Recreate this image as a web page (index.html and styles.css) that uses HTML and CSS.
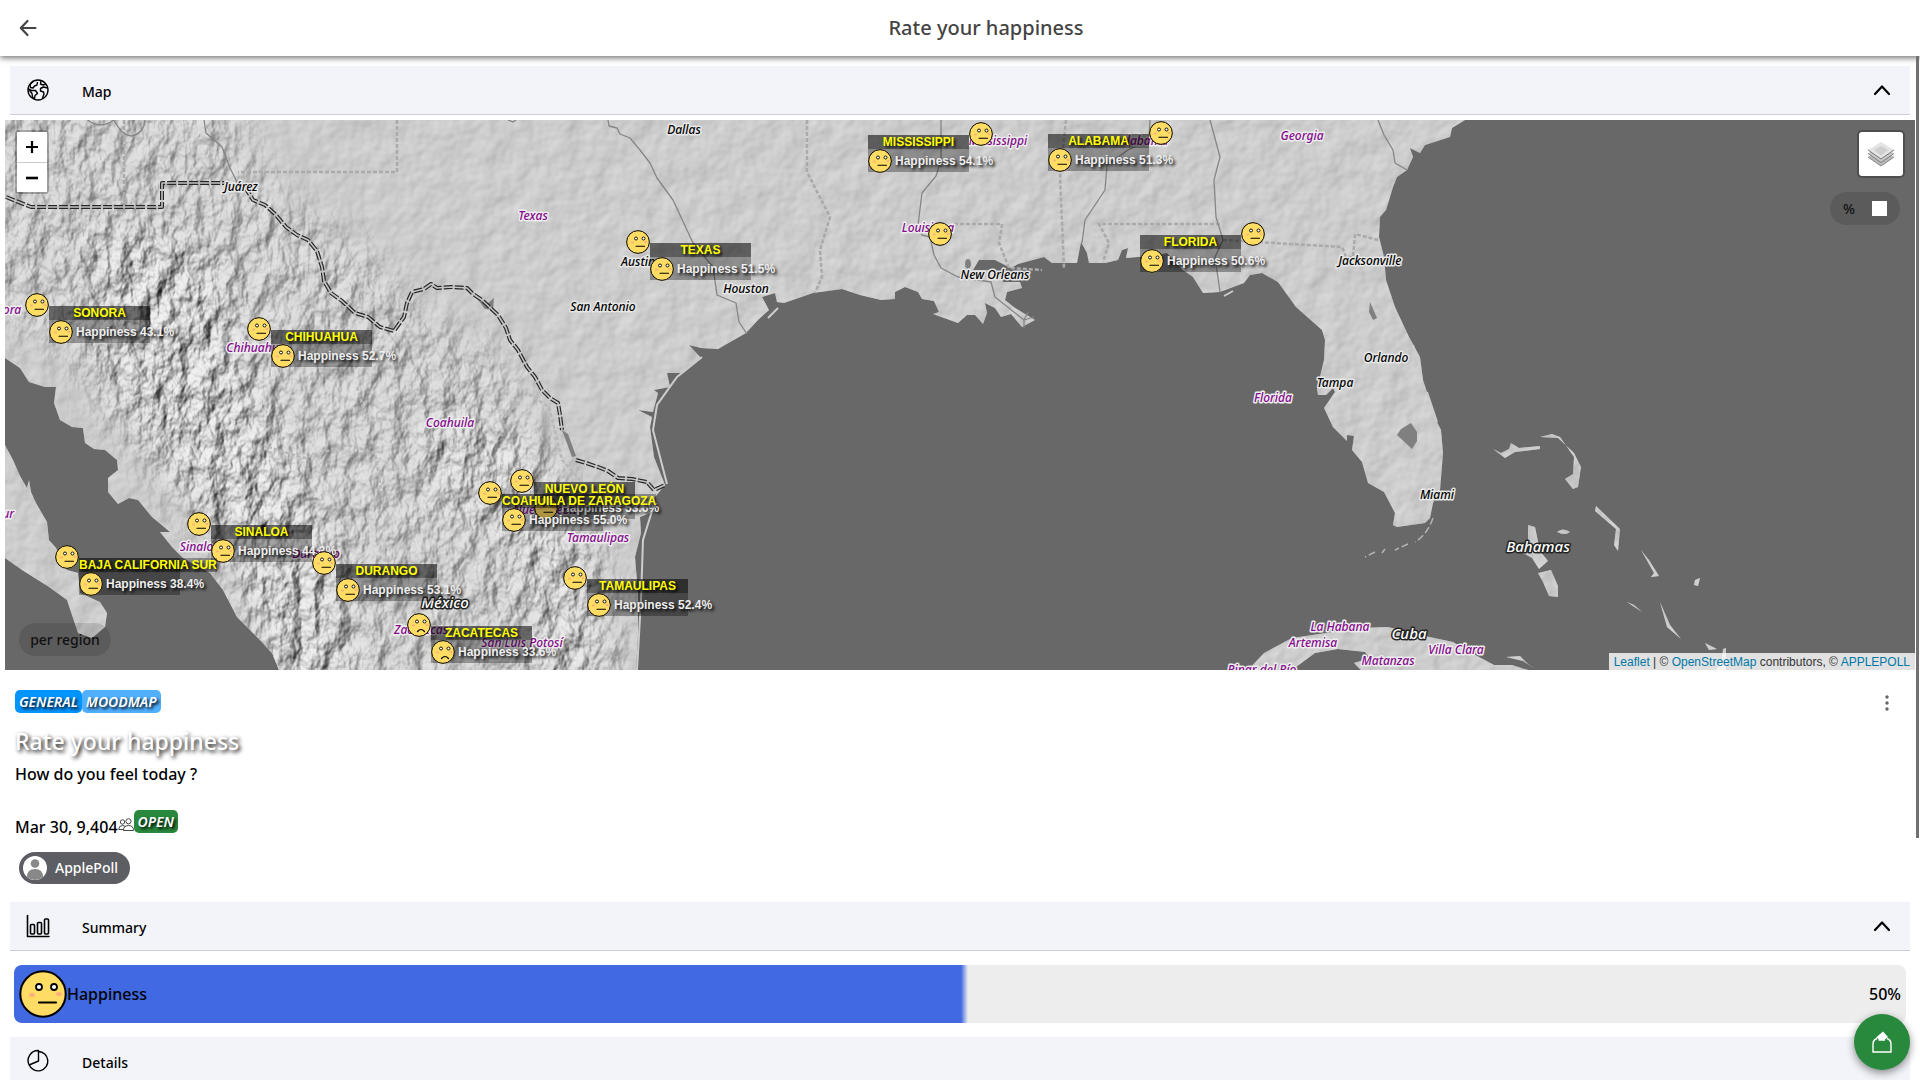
FILE: index.html
```html
<!DOCTYPE html>
<html lang="en">
<head>
<meta charset="utf-8">
<title>Rate your happiness</title>
<link rel="stylesheet" href="styles.css">
</head>
<body>
<svg class="defs" aria-hidden="true">
  <symbol id="face" viewBox="0 0 48 48">
    <circle cx="24" cy="24" r="23" fill="#ffdc64"/>
    <path d="M12 5a23 23 0 0 0 17 41A23 23 0 0 1 12 5z" fill="#ffc850"/>
    <ellipse cx="13" cy="25" rx="3" ry="2" fill="#ffb07c"/><ellipse cx="40" cy="24" rx="3" ry="2" fill="#ffb07c"/>
    <circle cx="24" cy="24" r="22.7" fill="none" stroke="#000" stroke-width="2"/>
    <circle cx="20" cy="17" r="3" fill="#fff" stroke="#000" stroke-width="1.8"/><circle cx="35" cy="17" r="3" fill="#fff" stroke="#000" stroke-width="1.8"/>
  </symbol>
  <symbol id="neutral" viewBox="0 0 48 48"><use href="#face"/><path d="M20 32.500h17" stroke="#000" stroke-width="2.200" stroke-linecap="round"/></symbol>
  <symbol id="sad" viewBox="0 0 48 48"><use href="#face"/><path d="M21 37q7-8 14 0" fill="none" stroke="#000" stroke-width="2.400" stroke-linecap="round"/></symbol>
  <symbol id="chevron" viewBox="0 0 20 20"><path d="M3 14l7-7.500 7 7.500" fill="none" stroke="#000" stroke-width="2.200" stroke-linecap="round" stroke-linejoin="round"/></symbol>
</svg>

<header class="topbar">
  <button class="back" aria-label="Back"><svg viewBox="0 0 20 20" width="20" height="20"><path d="M17.500 10H3M9.500 3L2.800 10l6.700 7" fill="none" stroke="#444" stroke-width="2.200" stroke-linecap="round" stroke-linejoin="round"/></svg></button>
  <h1>Rate your happiness</h1>
</header>

<main class="content">
  <button class="section">
    <svg viewBox="0 0 24 24" width="24" height="24"><g fill="none" stroke="#000" stroke-width="1.400" stroke-linejoin="round"><circle cx="12" cy="12" r="10"/><path d="M7.500 3L4 6.500l.5 3 2.500.5 1.500-2 2.500-1 .5-3M2.500 11l3 1.500 4 0 2 3-2.500 2-.5 3.500-2-2-.5-3.500zM15 2.500l-.5 3.500 2.500 1 3-1M21.500 10l-4-1-3 1.500 0 2.500 3 1 .5 2-1.500 4"/></g></svg>
    <span>Map</span>
    <svg class="chevron" width="20" height="20"><use href="#chevron"/></svg>
  </button>

  <div class="map">
    <svg class="tiles" width="1910" height="550" viewBox="5 120 1910 550">
      <defs>
        <path id="mainland" d="M5 120V358L20 368 29 382 45 387 56 387 54 403 60 420 72 427 83 428 85 443 94 449 105 450 117 460 118 470 108 478 108 492 118 504 129 498 138 500 152 517 170 532 160 532 172 547 183 558 210 573 223 590 237 617 257 637 272 653 279 670H636L638 633 638 593 635 557 641 533 640 517 656 511 655 497 665 485 654 457 650 427 652 417 638 410 653 412 658 393 654 390 670 387 667 373 683 373 701 358 689 345 701 348 718 349 746 333 758 320 769 310 762 297 775 293 777 302 784 303 813 293 842 289 860 295 881 300 895 299 895 292 905 287 918 292 922 299 934 301 939 312 933 314 958 323 967 315 975 315 983 324 987 313 985 303 995 308 1001 317 1011 314 1022 327 1035 320 1015 308 1005 300 1007 292 1022 288 1020 282 1003 282 995 270 973 270 979 260 995 260 1011 268 1018 264 1044 257 1052 263 1077 263 1081 242 1087 253 1089 263 1105 263 1118 260 1122 250 1128 248 1126 258 1150 256 1167 253 1183 270 1193 277 1203 293 1220 292 1244 283 1250 275 1262 273 1278 282 1296 307 1322 330 1325 340 1324 360 1317 389 1318 395 1326 395 1333 388 1335 392 1324 408 1333 427 1347 441 1347 435 1354 436 1352 450 1362 462 1368 483 1384 492 1395 513 1393 525 1397 527 1425 523 1430 518 1433 503 1440 490 1443 453 1441 430 1436 420 1423 380 1420 357 1409 337 1395 307 1386 280 1384 257 1379 237 1380 217 1386 210 1393 187 1397 177 1407 170 1413 157 1410 148 1420 153 1425 145 1450 137 1452 128 1465 120z"/>
        <path id="baja" d="M5 445L13 460 20 476 27 488 29 480 31 492 36 503 47 522 49 540 56 548 67 570 78 573 80 593 100 602 107 613 105 627 92 638 78 633 67 600 49 587 22 570 5 558z"/>
        <path id="islands" d="M1248 670L1264 653 1292 638 1333 632 1358 628 1388 627 1420 635 1453 642 1466 650 1494 665 1512 665 1528 670H1361L1354 663 1370 658 1365 652 1338 649 1315 653 1292 670zM1506 657l14-1 8 8 9 6-14-9zM1493 449l8 4 8-4 2-6 8 5 21-2v3l-25 3-10 6zM1540 437l18 1 16 15 7 14-3 20-5 2-8-10 8-5 1-17-14-20-8-3zM1528 525l7 2 5 24 8 10-9 8-7-11-9-5 5-8zM1538 573l13-3 7 16v11l-9-1-6-14zM1557 532q6-5 13 0-5 4-13 0zM1596 506l24 23-2 22-4-6 2-16-21-18zM1641 550l8 10 10 16-8 1 3-4zM1695 580l5-2-2 8-4-1zM1627 602l15 10-8-7zM1660 602l10 23 11 14-14-12zM1705 643l12 6-8 1zM1723 649l3-1v22h-10l6-10z"/>
        <path id="frontier" d="M6 197L31 207H162V183H224M245 187L253 200 265 205 275 214 286 227 297 235 308 240 317 251 322 267 324 281 331 293 342 301 355 313 368 317 380 327 394 331 404 317 407 303 412 292 424 289 431 284 437 288 451 287 467 288 473 294 482 300 498 315 506 328 510 340 518 350 527 367 535 377 542 390 550 398 558 403 560 415 562 430M576 460L586 463 598 467 608 471 618 478 632 479 647 482 654 490 665 485"/>
        <clipPath id="land"><use href="#mainland"/><use href="#baja"/><use href="#islands"/></clipPath>
        <filter id="relief" x="0" y="0" width="100%" height="100%" color-interpolation-filters="sRGB">
          <feTurbulence type="fractalNoise" baseFrequency="0.055 0.035" numOctaves="4" seed="11"/>
          <feColorMatrix values="0 0 0 0 0  0 0 0 0 0  0 0 0 0 0  1 0 0 0 0"/>
          <feDiffuseLighting surfaceScale="7" diffuseConstant="1.120" lighting-color="#d8d8d8"><feDistantLight azimuth="220" elevation="58"/></feDiffuseLighting>
        </filter>
        <filter id="plain" x="0" y="0" width="100%" height="100%" color-interpolation-filters="sRGB">
          <feTurbulence type="fractalNoise" baseFrequency="0.04" numOctaves="3" seed="4"/>
          <feColorMatrix values="0 0 0 0 0  0 0 0 0 0  0 0 0 0 0  1 0 0 0 0"/>
          <feDiffuseLighting surfaceScale="2" diffuseConstant="1.140" lighting-color="#d2d2d2"><feDistantLight azimuth="225" elevation="58"/></feDiffuseLighting>
        </filter>
        <filter id="soft"><feGaussianBlur stdDeviation="22"/></filter>
        <mask id="mountains"><g filter="url(#soft)"><path d="M-60 60H230L260 180 370 250 440 330 510 350 560 480 620 580V740H280L220 550 110 420 60 350-60 300z" fill="#888"/><path d="M90 230L210 260 260 420 330 560 350 740H300L240 580 120 400z" fill="#fff"/><path d="M440 400L560 470 600 600V740H560L530 560 430 480z" fill="#ddd"/></g></mask>
      </defs>
      <rect x="5" y="120" width="1910" height="550" fill="#686868"/>
      <g clip-path="url(#land)">
        <rect x="5" y="120" width="1910" height="550" fill="#cdcdcd"/>
        <rect x="5" y="120" width="1910" height="550" filter="url(#plain)" opacity=".5"/>
        <g mask="url(#mountains)"><rect x="5" y="120" width="700" height="550" filter="url(#relief)"/></g>
      </g>
      <g fill="#808080"><path d="M1411 423l6 9v9l-5 8-15-14 4-6z"/><path d="M1370 302l7 16-4 2-4-8z"/><path d="M476 297l12 6 6-5-1 12-8-1zM562 430l6 4 8 22-4 1z"/><ellipse cx="968" cy="264" rx="3" ry="5"/></g>
      <path d="M637 670l4-70 2-60 9-29M667 484l-14-54 4-25 20-28 25-20M768 318l10-10M1413 345l4 12 4 20M1427 392l10 30M1224 296l9-5" fill="none" stroke="#cdcdcd" stroke-width="2"/>
      <path d="M1433 518q-6 17-18 24M1408 544l-13 6M1385 549l-3 4M1375 552l-10 5" fill="none" stroke="#b4b4b4" stroke-width="1.500" stroke-dasharray="7 3"/>
      <g fill="none" stroke="#aaa" stroke-width="2.500" stroke-dasharray="4 2">
        <path d="M124 120V207M397 120V172H238M807 120V172L830 217 820 250 822 277 815 293M954 224H1002L999 243 1009 268 1042 270M1066 120L1060 177 1064 268M1220 224H1099L1109 243 1103 262M1223 240L1342 247 1346 257H1353L1355 234 1378 240"/>
        <path d="M357 387L366 417 402 422M268 447L304 458 348 445 375 453 384 507M500 422L527 393 549 407 562 460 580 480" stroke="#b8b8b8"/>
      </g>
      <g fill="none" stroke="#858585" stroke-width="1.300" stroke-linejoin="round">
        <path d="M88 120q12 10 26 0q8 16 18 16q12-3 13-16M204 120L206 133 222 147 230 168 238 184M508 120l5 2 3-2M608 120L609 126 617 128 620 134 630 138 640 150 650 163 657 178 673 200 693 243 713 267 717 295 736 303 739 322 747 334M941 120L941 160 936 176 922 193 918 225 922 235 930 237 934 255 941 268 958 277 991 282 995 297 1024 320 1034 317M1024 320V328M1024 320L1028 312M1150 120L1149 140 1128 150 1107 165 1105 190 1085 220 1082 243M1210 120L1220 157 1214 180 1216 217 1223 240 1215 257 1220 292M1378 120L1384 135 1393 150 1395 163 1407 170"/>
      </g>
      <g fill="none" stroke-linejoin="round">
        <use href="#frontier" stroke="#262626" stroke-width="4" stroke-dasharray="9 2"/>
        <use href="#frontier" stroke="#c4c4c4" stroke-width="1.600"/>
      </g>
      <g class="place state" text-anchor="middle">
        <text x="533" y="220">Texas</text><text x="928" y="232">Louisiana</text><text x="998" y="145">Mississippi</text><text x="1144" y="145">Alabama</text><text x="1302" y="140">Georgia</text><text x="1273" y="402">Florida</text>
        <text x="1340" y="631">La Habana</text><text x="1313" y="647">Artemisa</text><text x="1456" y="654">Villa Clara</text><text x="1388" y="665">Matanzas</text><text x="1262" y="674">Pinar del Río</text>
        <text x="2" y="314">Sonora</text><text x="256" y="352">Chihuahua</text><text x="450" y="427">Coahuila</text><text x="5" y="518">Sur</text><text x="200" y="551">Sinaloa</text><text x="316" y="558">Durango</text><text x="598" y="542">Tamaulipas</text><text x="421" y="634">Zacatecas</text><text x="522" y="647">San Luis Potosí</text><text x="545" y="514">Nuevo León</text>
      </g>
      <g class="place city" text-anchor="middle">
        <text x="684" y="134">Dallas</text><text x="241" y="191">Juárez</text><text x="603" y="311">San Antonio</text><text x="638" y="266">Austin</text><text x="746" y="293">Houston</text><text x="995" y="279">New Orleans</text><text x="1370" y="265">Jacksonville</text><text x="1386" y="362">Orlando</text><text x="1335" y="387">Tampa</text><text x="1437" y="499">Miami</text>
      </g>
      <g class="place country" text-anchor="middle"><text x="1538" y="552">Bahamas</text><text x="1409" y="639">Cuba</text><text x="445" y="608">México</text></g>
    </svg>

    <div class="pin" style="left:20px;top:173px"><svg><use href="#neutral"/></svg><div class="tip"><b>SONORA</b><p><svg><use href="#neutral"/></svg>Happiness 43.1%</p></div></div>
    <div class="pin" style="left:242px;top:197px"><svg><use href="#neutral"/></svg><div class="tip"><b>CHIHUAHUA</b><p><svg><use href="#neutral"/></svg>Happiness 52.7%</p></div></div>
    <div class="pin" style="left:621px;top:110px"><svg><use href="#neutral"/></svg><div class="tip"><b>TEXAS</b><p><svg><use href="#neutral"/></svg>Happiness 51.5%</p></div></div>
    <div class="pin" style="left:182px;top:392px"><svg><use href="#neutral"/></svg><div class="tip"><b>SINALOA</b><p><svg><use href="#neutral"/></svg>Happiness 44.3%</p></div></div>
    <div class="pin" style="left:50px;top:425px"><svg><use href="#neutral"/></svg><div class="tip"><b>BAJA CALIFORNIA SUR</b><p><svg><use href="#neutral"/></svg>Happiness 38.4%</p></div></div>
    <div class="pin" style="left:307px;top:431px"><svg><use href="#neutral"/></svg><div class="tip"><b>DURANGO</b><p><svg><use href="#neutral"/></svg>Happiness 53.1%</p></div></div>
    <div class="pin" style="left:505px;top:349px"><svg><use href="#neutral"/></svg><div class="tip"><b>NUEVO LEÓN</b><p><svg><use href="#neutral"/></svg>Happiness 53.6%</p></div></div>
    <div class="pin" style="left:473px;top:361px"><svg><use href="#neutral"/></svg><div class="tip"><b>COAHUILA DE ZARAGOZA</b><p><svg><use href="#neutral"/></svg>Happiness 55.0%</p></div></div>
    <div class="pin" style="left:558px;top:446px"><svg><use href="#neutral"/></svg><div class="tip"><b>TAMAULIPAS</b><p><svg><use href="#neutral"/></svg>Happiness 52.4%</p></div></div>
    <div class="pin" style="left:402px;top:493px"><svg><use href="#sad"/></svg><div class="tip"><b>ZACATECAS</b><p><svg><use href="#sad"/></svg>Happiness 33.6%</p></div></div>
    <div class="pin" style="left:923px;top:102px"><svg><use href="#neutral"/></svg></div>
    <div class="pin" style="left:964px;top:2px"><svg><use href="#neutral"/></svg><div class="tip before"><b>MISSISSIPPI</b><p><svg><use href="#neutral"/></svg>Happiness 54.1%</p></div></div>
    <div class="pin" style="left:1144px;top:1px"><svg><use href="#neutral"/></svg><div class="tip before"><b>ALABAMA</b><p><svg><use href="#neutral"/></svg>Happiness 51.3%</p></div></div>
    <div class="pin" style="left:1236px;top:102px"><svg><use href="#neutral"/></svg><div class="tip before"><b>FLORIDA</b><p><svg><use href="#neutral"/></svg>Happiness 50.6%</p></div></div>

    <div class="zoom">
      <button aria-label="Zoom in"><svg viewBox="0 0 12 12" width="12" height="12"><path d="M0 6h12M6 0v12" stroke="#000" stroke-width="2.200"/></svg></button>
      <button aria-label="Zoom out"><svg viewBox="0 0 12 12" width="12" height="12"><path d="M0 6h12" stroke="#000" stroke-width="2.600"/></svg></button>
    </div>
    <div class="map-right">
      <button class="layers" aria-label="Layers"><svg viewBox="0 0 26 26" width="26" height="26"><path d="M0 16l13-8 13 8-13 9z" fill="#b9b9b9"/><path d="M0 16l13 9 13-9" fill="none" stroke="#888"/><path d="M0 12.500l13-8 13 8-13 9z" fill="#c9c9c9"/><path d="M0 12.500l13 9 13-9" fill="none" stroke="#808080"/><path d="M0 9l13-8 13 8-13 9z" fill="#e4e4e4"/><path d="M6 9l7-4 7 4-7 6z" fill="#cfcfcf"/><path d="M0 9l13 9 13-9" fill="none" stroke="#777"/></svg></button>
      <label class="pill percent">% <input type="checkbox"></label>
    </div>
    <button class="pill region">per region</button>
    <div class="credit"><a href="#">Leaflet</a> | © <a href="#">OpenStreetMap</a> contributors, © <a href="#">APPLEPOLL</a></div>
  </div>

  <section class="poll">
    <div class="tags"><span class="badge general">GENERAL</span><span class="badge moodmap">MOODMAP</span>
      <button class="more" aria-label="More"><svg viewBox="0 0 4 16" width="4" height="16" fill="#666"><circle cx="2" cy="2" r="1.700"/><circle cx="2" cy="8" r="1.700"/><circle cx="2" cy="14" r="1.700"/></svg></button>
    </div>
    <h2>Rate your happiness</h2>
    <p class="question">How do you feel today ?</p>
    <div class="meta"><span class="date">Mar 30, 9,404</span><svg class="people" viewBox="0 0 16 14" width="16" height="14"><g fill="#fff" stroke="#333" stroke-width=".9"><circle cx="4.500" cy="4" r="2.200"/><path d="M.7 11.500q0-4 4-4t4 4z"/><circle cx="10.500" cy="3.300" r="2.600"/><path d="M5.500 12.500q0-5 5-5t5 5z"/></g></svg><span class="badge open">OPEN</span></div>
    <a class="chip" href="#"><svg viewBox="0 0 24 24" width="24" height="24"><circle cx="12" cy="12" r="12" fill="#fff"/><circle cx="12" cy="7.500" r="4.300" fill="#888"/><path d="M4 21q0-8 8-8t8 8q-3.500 3-8 3t-8-3z" fill="#888"/></svg>ApplePoll</a>
  </section>

  <button class="section">
    <svg viewBox="0 0 24 24" width="24" height="24"><g fill="none" stroke="#000" stroke-width="1.600" stroke-linecap="round" stroke-linejoin="round"><path d="M1.500 1.500v21h21.500"/><rect x="4.500" y="10.500" width="4" height="9.500" rx="1"/><rect x="11.500" y="8.500" width="4" height="11.500" rx="1"/><rect x="18.500" y="5" width="4" height="15" rx="1"/></g></svg>
    <span>Summary</span>
    <svg class="chevron" width="20" height="20"><use href="#chevron"/></svg>
  </button>
  <div class="result"><svg width="48" height="48"><use href="#neutral"/></svg><span>Happiness</span><strong>50%</strong></div>
  <button class="section">
    <svg viewBox="0 0 24 24" width="24" height="24"><g fill="none" stroke="#000" stroke-width="1.400" stroke-linejoin="round"><path d="M12.500 1.500V12L3.200 16A10 10 0 0 1 12.500 1.500z"/><path d="M12.500 2.500a9.700 9.700 0 1 1-9.300 13.500"/></g></svg>
    <span>Details</span>
    <svg class="chevron" width="20" height="20"><use href="#chevron"/></svg>
  </button>
</main>
<div class="scroll-thumb"></div>
<button class="fab" aria-label="Vote"><svg viewBox="0 0 22 24" width="22" height="24"><path d="M6 8.500Q2 10 2 14v8h18v-8q0-4-4-5.500" fill="none" stroke="#fff" stroke-width="1.400"/><path d="M5 7.500l7-6 5 5.500-3 2.500v1.300H7.500V9z" fill="#fff"/></svg></button>
</body>
</html>
```
FILE: styles.css
```css
* { box-sizing: border-box; }
body { margin: 0; height: 100vh; overflow: hidden; display: flex; flex-direction: column; background: #fff; color: #000; font: 500 16px/24px "Noto Sans", "Open Sans", sans-serif; }
button { font: inherit; color: inherit; border: 0; padding: 0; background: none; cursor: pointer; }
h1, h2, p { margin: 0; }
.defs { position: absolute; width: 0; height: 0; }

.topbar { flex: none; display: flex; align-items: center; height: 56px; background: #fff; box-shadow: 0 2px 6px rgba(0, 0, 0, .55); z-index: 5; }
.back { width: 52px; height: 56px; padding: 0 0 0 4px; display: grid; place-items: center; }
.topbar h1 { flex: 1; text-align: center; font-size: 20px; font-weight: 500; color: #444; }

.content { flex: 1; min-height: 0; overflow: hidden; padding: 10px 5px 0; }
.section { display: flex; align-items: center; width: calc(100% - 10px); height: 49px; margin: 0 5px; padding: 0 18px 0 16px; background: #f3f4f9; border-bottom: 1px solid #cdced4; font-size: 14px; text-align: left; }
.section span { flex: 1; margin-left: 32px; padding-top: 3px; }

.map { position: relative; height: 550px; margin-top: 5px; overflow: hidden; background: #686868; }
.tiles { display: block; }
.place { font: italic 500 12px "Noto Sans", sans-serif; paint-order: stroke; stroke-width: 3px; stroke-linejoin: round; }
.state { fill: #850a8c; stroke: #eee; }
.city { fill: #000; stroke: #e8e8e8; }
.country { font-size: 15px; fill: #fff; stroke: #222; }

.pin { position: absolute; width: 24px; height: 24px; }
.pin svg { display: block; flex: none; width: 24px; height: 24px; }
.tip { position: absolute; top: 13px; left: 24px; width: 101px; height: 37px; background: rgba(0, 0, 0, .32); color: #fff; font: bold 12px/14px "Liberation Sans", sans-serif; white-space: nowrap; text-shadow: 2px 2px 3px #000; }
.tip.before { left: auto; right: 24px; }
.tip b { display: block; width: max-content; min-width: 101px; text-align: center; color: #ff0; background: rgba(0, 0, 0, .32); }
.tip p { display: flex; align-items: center; gap: 3px; height: 23px; color: #eee; }

.zoom { position: absolute; top: 10px; left: 10px; display: grid; border: 2px solid rgba(0, 0, 0, .25); border-radius: 4px; background-clip: padding-box; }
.zoom button { width: 30px; height: 30px; display: grid; place-items: center; background: #fff; }
.zoom button + button { border-top: 1px solid #ccc; }
.map-right { position: absolute; top: 10px; right: 10px; display: grid; justify-items: end; gap: 14px; }
.layers { width: 48px; height: 48px; display: grid; place-items: center; background: #fff; background-clip: padding-box; border: 2px solid rgba(0, 0, 0, .25); border-radius: 5px; }
.pill { height: 33px; border-radius: 17px; background: rgba(0, 0, 0, .12); color: #111; font-size: 14px; }
.percent { display: flex; align-items: center; justify-content: space-between; width: 70px; margin-right: 5px; padding: 0 13px; }
.percent input { appearance: none; width: 15px; height: 15px; margin: 0; background: #fff; }
.region { position: absolute; left: 14px; bottom: 14px; width: 92px; }
.credit { position: absolute; right: 0; bottom: 0; padding: 1px 5px 0; background: rgba(255, 255, 255, .8); color: #333; font: 12px/16px "Liberation Sans", sans-serif; }
.credit a { color: #0078a8; text-decoration: none; }

.poll { padding: 20px 10px 18px; }
.tags { display: flex; align-items: flex-start; height: 26px; }
.badge { height: 23px; padding: 0 4px; border-radius: 5px; color: #fff; font-size: 14px; line-height: 23px; font-style: italic; font-weight: 600; text-shadow: 2px 2px 3px #000; }
.general { background: #0094ff; }
.moodmap { background: #50b0ff; }
.open { background: #28883c; margin-bottom: 8px; }
.more { margin-left: auto; width: 36px; height: 26px; display: grid; place-items: center; }
.poll h2 { margin-top: 9px; font-size: 23px; line-height: 32px; font-weight: 500; color: #fff; text-shadow: 2px 2px 4px #000; }
.question { margin-top: 5px; }
.meta { display: flex; align-items: flex-end; height: 55px; margin-bottom: 11px; }
.date { margin-bottom: 2px; }
.people { margin-bottom: 9px; }
.chip { display: inline-flex; align-items: center; gap: 8px; height: 32px; margin-left: 4px; padding: 0 12px 0 4px; border-radius: 16px; background: #5c5e63; color: #fff; font-size: 14px; text-decoration: none; vertical-align: top; }

.result { display: flex; align-items: center; height: 58px; margin: 14px 9px; padding: 0 5px; border-radius: 8px; background: linear-gradient(to right, #4169e1 calc(50% + 1px), #ededed calc(50% + 8px)); }
.result strong { margin-left: auto; font-weight: 500; }
.scroll-thumb { position: fixed; top: 56px; right: 1px; width: 3px; height: 782px; background: #707070; z-index: 6; }
.fab { position: fixed; right: 10px; bottom: 10px; width: 56px; height: 56px; border-radius: 50%; display: grid; place-items: center; background: #28883c; box-shadow: 0 3px 8px rgba(0, 0, 0, .45); }
```
